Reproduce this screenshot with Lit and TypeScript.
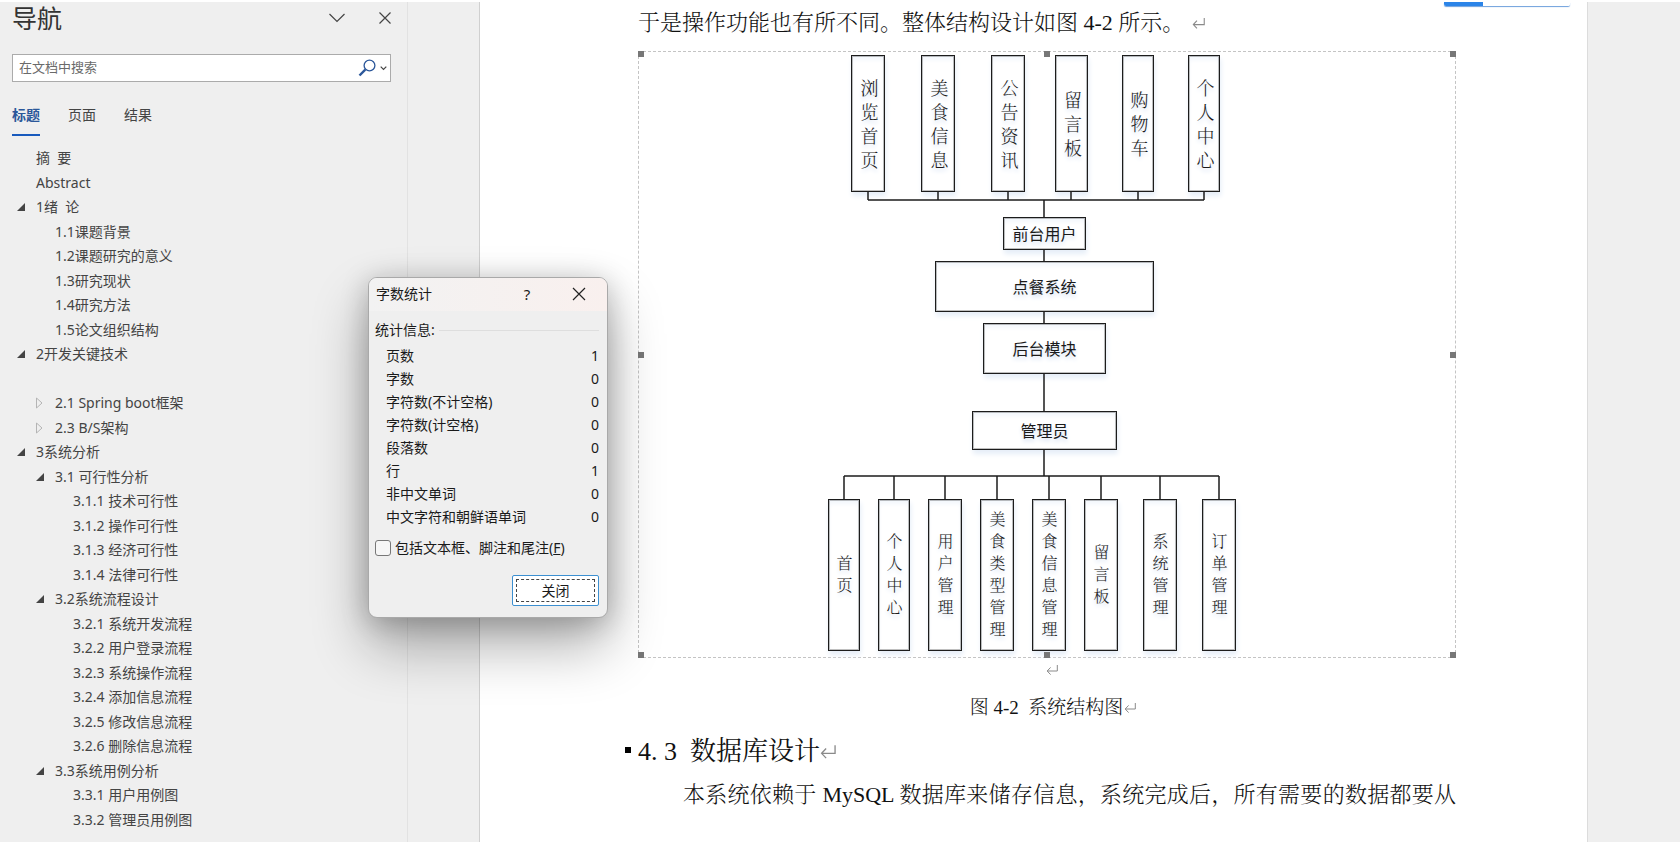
import { LitElement, html, svg, css } from "lit";
import { customElement, property } from "lit/decorators.js";
import { classMap } from "lit/directives/class-map.js";
import { styleMap } from "lit/directives/style-map.js";

type Fold = "open" | "closed" | "";
interface Heading { level: number; text: string; fold: Fold }
interface Node { x: number; y: number; w: number; h: number; text: string }

const h = (level: number, text: string, fold: Fold = ""): Heading => ({ level, text, fold });

const HEADINGS: Heading[] = [
  h(1, "摘  要"),
  h(1, "Abstract"),
  h(1, "1绪  论", "open"),
  h(2, "1.1课题背景"),
  h(2, "1.2课题研究的意义"),
  h(2, "1.3研究现状"),
  h(2, "1.4研究方法"),
  h(2, "1.5论文组织结构"),
  h(1, "2开发关键技术", "open"),
  h(2, ""),
  h(2, "2.1 Spring boot框架", "closed"),
  h(2, "2.3 B/S架构", "closed"),
  h(1, "3系统分析", "open"),
  h(2, "3.1 可行性分析", "open"),
  h(3, "3.1.1 技术可行性"),
  h(3, "3.1.2 操作可行性"),
  h(3, "3.1.3 经济可行性"),
  h(3, "3.1.4 法律可行性"),
  h(2, "3.2系统流程设计", "open"),
  h(3, "3.2.1 系统开发流程"),
  h(3, "3.2.2 用户登录流程"),
  h(3, "3.2.3 系统操作流程"),
  h(3, "3.2.4 添加信息流程"),
  h(3, "3.2.5 修改信息流程"),
  h(3, "3.2.6 删除信息流程"),
  h(2, "3.3系统用例分析", "open"),
  h(3, "3.3.1 用户用例图"),
  h(3, "3.3.2 管理员用例图"),
];

const STATS: [string, number][] = [
  ["页数", 1],
  ["字数", 0],
  ["字符数(不计空格)", 0],
  ["字符数(计空格)", 0],
  ["段落数", 0],
  ["行", 1],
  ["非中文单词", 0],
  ["中文字符和朝鲜语单词", 0],
];

const column = (y: number, height: number) => (x: number, w: number, text: string): Node => ({ x, y, w, h: height, text });
const top = column(4, 137);
const bottom = column(448, 152);

const FRONT: Node[] = [
  top(23, 34, "浏览首页"),
  top(93, 34, "美食信息"),
  top(163, 34, "公告资讯"),
  top(227, 33, "留言板"),
  top(294, 32, "购物车"),
  top(360, 32, "个人中心"),
];
const BACK: Node[] = [
  bottom(0, 32, "首页"),
  bottom(50, 32, "个人中心"),
  bottom(100, 34, "用户管理"),
  bottom(152, 34, "美食类型管理"),
  bottom(204, 34, "美食信息管理"),
  bottom(256, 34, "留言板"),
  bottom(315, 34, "系统管理"),
  bottom(374, 34, "订单管理"),
];
const CORE: Node[] = [
  { x: 175, y: 166, w: 83, h: 33, text: "前台用户" },
  { x: 107, y: 210, w: 219, h: 51, text: "点餐系统" },
  { x: 155, y: 272, w: 123, h: 51, text: "后台模块" },
  { x: 144, y: 360, w: 145, h: 39, text: "管理员" },
];

const returnMark = (size: number) => svg`
  <svg class="mark" width=${size} height=${size} viewBox="0 0 12 12" aria-hidden="true">
    <path d="M11.3 1v6H1.2M4.6 3.4 1.2 7l3.4 3.6" fill="none" stroke="currentColor" stroke-width="1"/>
  </svg>`;

@customElement("nav-pane")
class NavPane extends LitElement {
  static styles = css`
    :host { display: flex; flex-direction: column; box-sizing: border-box; padding: 0 16px 10px 12px;
      color: #444; font: 14px "Noto Sans", "Noto Sans CJK SC", sans-serif; }
    button { border: 0; background: none; padding: 0; font: inherit; color: inherit; display: flex; align-items: center; }
    .head { display: flex; align-items: center; height: 32px; margin-bottom: 20px; }
    .head h1 { margin: 0; flex: 1; font-size: 25px; line-height: 32px; font-weight: 400; color: #333; }
    .head button { width: 24px; justify-content: center; }
    .head .fold { margin-right: 24px; }
    .head .shut { margin-right: -6px; }
    .search { display: flex; align-items: center; height: 28px; box-sizing: border-box; border: 1px solid #ababab;
      background: #fff; padding: 0 3px 0 6px; gap: 4px; }
    .search input { flex: 1; min-width: 0; height: 26px; box-sizing: border-box; border: 0; outline: 0; padding: 0 0 2px; background: none; font: inherit; font-size: 13px; }
    .search input::placeholder { color: #6a6a6a; opacity: 1; }
    .tabs { display: flex; gap: 28px; margin-top: 21px; height: 33px; }
    .tabs button { line-height: 24px; align-items: flex-start; height: 33px; box-sizing: border-box; border-bottom: 2px solid transparent; }
    .tabs .active { color: #2b579a; font-weight: 700; border-color: #185abd; }
    .tree { flex: 1; margin: 10px 0 0; padding: 0; list-style: none; display: grid; grid-auto-rows: 1fr; }
    .row { display: flex; align-items: center; min-height: 24px; white-space: pre; }
    .l2 { padding-left: 19px; }
    .l3 { padding-left: 37px; }
    .twist { width: 24px; display: flex; }
    .twist svg { margin-left: 5px; }
    .row a { color: inherit; text-decoration: none; line-height: 20px; }
  `;
  render() {
    return html`
      <div class="head">
        <h1>导航</h1>
        <button class="fold" aria-label="任务窗格选项">
          <svg width="18" height="12" viewBox="0 0 18 12"><path d="M1.5 2 9 9.500 16.500 2" fill="none" stroke="#444" stroke-width="1.200"/></svg>
        </button>
        <button class="shut" aria-label="关闭窗格">
          <svg width="14" height="14" viewBox="0 0 14 14"><path d="m1.500 1.500 11 11m0-11-11 11" fill="none" stroke="#444" stroke-width="1.200"/></svg>
        </button>
      </div>
      <div class="search">
        <input type="text" placeholder="在文档中搜索" aria-label="在文档中搜索">
        <button aria-label="搜索">
          <svg width="18" height="18" viewBox="0 0 18 18" fill="none" stroke="#2b579a"><circle cx="11.500" cy="6.500" r="5.400" stroke-width="1.300"/><path d="m7.300 10.700-5.800 5.800" stroke-width="2.400"/></svg>
        </button>
        <button aria-label="搜索选项">
          <svg width="7" height="5" viewBox="0 0 7 5"><path d="m.7.7 2.800 2.800L6.300.7" fill="none" stroke="#444" stroke-width="1.200"/></svg>
        </button>
      </div>
      <div class="tabs" role="tablist">
        <button class="active" role="tab" aria-selected="true">标题</button>
        <button role="tab">页面</button>
        <button role="tab">结果</button>
      </div>
      <ul class="tree">
        ${HEADINGS.map((it) => html`
          <li class=${classMap({ row: true, l2: it.level === 2, l3: it.level === 3 })}><span class="twist">${it.fold === "open"
              ? svg`<svg width="8" height="8" viewBox="0 0 8 8"><path d="M8 0v8H0z" fill="#444"/></svg>`
              : it.fold === "closed"
              ? svg`<svg width="7" height="12" viewBox="0 0 7 12"><path d="M.5 1v10l5.500-5z" fill="none" stroke="#b4b4b4"/></svg>`
              : ""}</span>${it.text ? html`<a href="#">${it.text}</a>` : ""}</li>`)}
      </ul>`;
  }
}

@customElement("structure-chart")
class StructureChart extends LitElement {
  static styles = css`
    :host { display: block; position: relative; width: 408px; height: 607px; }
    .lines { position: absolute; inset: 0; }
    .node { position: absolute; box-sizing: border-box; border: 1px solid #1c1c1c; outline: 1px solid rgba(0, 0, 0, .25); outline-offset: -2px;
      background: #fff; box-shadow: 1px 4px 5px #e6eef8, inset 0 4px 4px #f3f7fc; color: #1a1a1a; padding-bottom: 2px;
      display: flex; align-items: center; justify-content: center; text-shadow: 0 3px 4px #cfdcf0;
      font: 16px/22px "Noto Sans CJK SC", sans-serif; }
    .tall { font-family: "Noto Serif CJK SC", "Noto Sans CJK SC", serif; font-weight: 300; text-align: center; }
    .tall span { width: 1em; word-break: break-all; margin-left: 1px; }
    .front { font-size: 18px; line-height: 24px; }
    .front span { margin-left: 3px; }
  `;
  private box(n: Node, kind: string) {
    return html`<div class="node ${kind}" style=${styleMap({ left: `${n.x}px`, top: `${n.y}px`, width: `${n.w}px`, height: `${n.h}px` })}><span>${n.text}</span></div>`;
  }
  render() {
    const mid = (n: Node) => Math.floor(n.x + n.w / 2);
    const up = FRONT.map((n) => `M${mid(n)} 140V149`).join("");
    const down = BACK.map((n) => `M${mid(n)} 425V449`).join("");
    return html`
      ${FRONT.map((n) => this.box(n, "tall front"))}
      ${CORE.map((n) => this.box(n, ""))}
      ${BACK.map((n) => this.box(n, "tall"))}
      <svg class="lines" width="408" height="607" viewBox="0 0 408 607" fill="none" stroke="#1c1c1c" stroke-width="1.500" aria-hidden="true">
        <path d="${up}M${mid(FRONT[0])} 149H${mid(FRONT[5])}M216 149V167M216 198V211M216 260V273M216 322V361M216 398V425M${mid(BACK[0])} 425H${mid(BACK[7])}${down}"/>
      </svg>`;
  }
}

@customElement("word-count")
class WordCount extends LitElement {
  @property({ type: Boolean }) notes = false;
  static styles = css`
    :host { display: block; box-sizing: border-box; width: 240px; border: 1px solid #a9a9a9; border-radius: 9px; overflow: hidden;
      background: #efefef; color: #1a1a1a; font: 14px/20px "Noto Sans", "Noto Sans CJK SC", sans-serif;
      box-shadow: 0 28px 56px rgba(0, 0, 0, .32), 0 4px 28px rgba(0, 0, 0, .22); }
    .bar { display: flex; align-items: center; height: 33px; box-sizing: border-box; padding: 0 21px 2px 7px; background: linear-gradient(90deg, #f2f2f2, #f9f0ee); }
    .bar h2 { margin: 0; flex: 1; font-size: 14px; font-weight: 400; }
    .bar button { width: 14px; padding: 0; border: 0; background: none; font: inherit; font-size: 15px; color: inherit; display: flex; justify-content: center; }
    .bar .help { margin-right: 38px; }
    .body { padding: 9px 8px 11px 6px; }
    .legend { display: flex; align-items: center; gap: 4px; }
    .legend::after { content: ""; flex: 1; border-top: 1px solid #dedede; }
    table { width: 100%; height: 183px; border-collapse: collapse; margin-top: 5px; }
    th, td { padding: 0; font-weight: 400; line-height: 20px; }
    th { text-align: left; padding-left: 11px; }
    td { text-align: right; }
    .check { display: flex; align-items: center; gap: 4px; margin-top: 10px; white-space: nowrap; }
    .check input { appearance: none; margin: 0; width: 16px; height: 16px; box-sizing: border-box; border: 1px solid #777; border-radius: 3px; background: #f6f6f6; }
    .foot { display: flex; justify-content: flex-end; margin-top: 17px; }
    .foot button { width: 87px; height: 31px; padding: 0; border: 1px solid #3c8fd0; border-radius: 2px; background: #fff; font: inherit; color: inherit;
      outline: 1px dashed #444; outline-offset: -5px; }
  `;
  render() {
    return html`
      <div class="bar">
        <h2>字数统计</h2>
        <button class="help" aria-label="帮助">?</button>
        <button aria-label="关闭对话框"><svg width="14" height="14" viewBox="0 0 14 14"><path d="m1 1 12 12M13 1 1 13" stroke="#222" stroke-width="1.200"/></svg></button>
      </div>
      <div class="body">
        <div class="legend">统计信息:</div>
        <table>${STATS.map(([k, v]) => html`<tr><th scope="row">${k}</th><td>${v}</td></tr>`)}</table>
        <label class="check"><input type="checkbox" .checked=${this.notes}><span>包括文本框、脚注和尾注(<u>F</u>)</span></label>
        <div class="foot"><button>关闭</button></div>
      </div>`;
  }
}

@customElement("app-root")
class AppRoot extends LitElement {
  static styles = css`
    :host { display: flex; min-height: 100vh; box-sizing: border-box; border-top: 2px solid #fff; background: #efefef; position: relative; overflow: hidden; }
    nav-pane { width: 408px; border-right: 1px solid #e2e2e2; flex: none; }
    .gutter { width: 72px; box-sizing: border-box; border-right: 1px solid #d0d0d0; flex: none; }
    .page { flex: 1; min-width: 0; background: #fff; padding: 1px 131px 0 158px; color: #111; position: relative;
      font: 300 22px/40px "Liberation Serif", "Noto Serif CJK SC", "Noto Sans CJK SC", serif; }
    .rail { width: 93px; box-sizing: border-box; border-left: 1px solid #dcdcdc; flex: none; }
    p, h2 { margin: 0; white-space: nowrap; }
    .latin { font-weight: 400; }
    .mark { color: #8a8a8a; }
    .lead { display: flex; align-items: center; gap: 8px; }
    .frame { position: relative; margin-top: 8px; padding-left: 190px; outline: 1px dashed #c4c4c4; outline-offset: -1px; }
    .grip { position: absolute; width: 6px; height: 6px; background: #777; }
    .t { top: 0; } .b { bottom: 0; } .l { left: 0; } .r { right: 0; }
    .c { left: calc(50% - 3px); } .m { top: calc(50% - 3px); }
    .blank { display: flex; justify-content: center; align-items: center; height: 24px; padding-left: 10px; }
    .caption { display: flex; justify-content: center; align-items: center; gap: 1px; font-size: 19px; line-height: 32px; margin-top: 10px; padding-left: 12px; white-space: pre; }
    .title { display: flex; align-items: center; font-size: 26px; font-weight: 400; margin: 8px 0 3px -13px; }
    .title::before { content: ""; width: 6px; height: 6px; margin: 0 7px 4px 0; background: #000; }
    .half { width: 13px; }
    .body { text-indent: 45px; text-align-last: justify; }
    .progress { position: absolute; top: 0; right: 17px; width: 126px; height: 4px; background: linear-gradient(90deg, #2b84e8 31%, #fff 31%); box-shadow: 0 1px 1px #6d9fdc; border-radius: 0 0 2px 2px; }
    word-count { position: absolute; left: 368px; top: 275px; }
  `;
  render() {
    return html`
      <nav-pane></nav-pane>
      <div class="gutter"></div>
      <main class="page">
        <div class="progress"></div>
        <p class="lead"><span>于是操作功能也有所不同。整体结构设计如图<span class="latin"> 4-2 </span>所示。</span>${returnMark(13)}</p>
        <div class="frame">
          <structure-chart></structure-chart>
          ${["t l", "t c", "t r", "m l", "m r", "b l", "b c", "b r"].map((c) => html`<span class="grip ${c}"></span>`)}
        </div>
        <div class="blank">${returnMark(12)}</div>
        <p class="caption"><span>图<span class="latin"> 4-2  </span>系统结构图</span>${returnMark(12)}</p>
        <h2 class="title"><span class="half">4</span><span class="half">.</span><span class="half">3</span><span class="half"></span><span>数据库设计</span>${returnMark(16)}</h2>
        <p class="body">本系统依赖于<span class="latin"> MySQL </span>数据库来储存信息，系统完成后，所有需要的数据都要从</p>
      </main>
      <div class="rail"></div>
      <word-count></word-count>`;
  }
}
